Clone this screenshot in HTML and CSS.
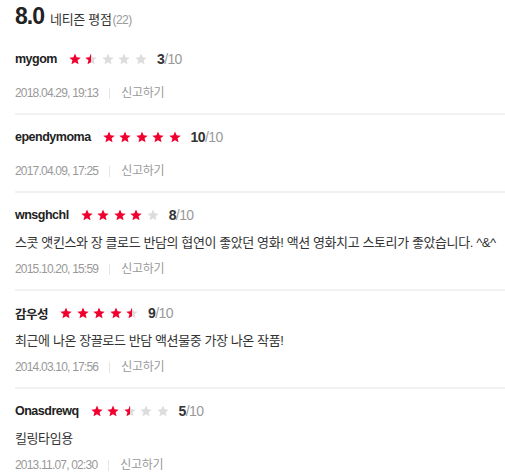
FILE: index.html
```html
<!DOCTYPE html>
<html lang="ko">
<head>
<meta charset="utf-8">
<link rel="stylesheet" href="styles.css">
</head>
<body>
<svg class="defs" width="0" height="0" aria-hidden="true">
  <defs>
    <linearGradient id="half" x1="0" x2="1" y1="0" y2="0">
      <stop offset="50%" stop-color="#f0002e"/>
      <stop offset="50%" stop-color="#dcdcdc"/>
    </linearGradient>
    <symbol id="star" viewBox="0 0 12 12">
      <polygon points="6,0.5 7.59,4.32 11.71,4.65 8.57,7.33 9.53,11.35 6,9.2 2.47,11.35 3.43,7.33 0.29,4.65 4.41,4.32"/>
    </symbol>
  </defs>
</svg>
<div class="page">
  <div class="header">
    <span class="score-big">8.0</span>
    <span class="header-label">네티즌 평점</span><span class="header-count">(22)</span>
  </div>
  <ul class="reviews">
    <li class="review">
      <div class="line">
        <span class="name">mygom</span>
        <span class="stars">
          <svg class="star on"><use href="#star"/></svg>
          <svg class="star half"><use href="#star"/></svg>
          <svg class="star"><use href="#star"/></svg>
          <svg class="star"><use href="#star"/></svg>
          <svg class="star"><use href="#star"/></svg>
        </span>
        <span class="score"><b>3</b>/10</span>
      </div>
      <div class="meta"><span class="date">2018.04.29, 19:13</span><span class="report">신고하기</span></div>
    </li>
    <li class="review">
      <div class="line">
        <span class="name">ependymoma</span>
        <span class="stars">
          <svg class="star on"><use href="#star"/></svg>
          <svg class="star on"><use href="#star"/></svg>
          <svg class="star on"><use href="#star"/></svg>
          <svg class="star on"><use href="#star"/></svg>
          <svg class="star on"><use href="#star"/></svg>
        </span>
        <span class="score"><b>10</b>/10</span>
      </div>
      <div class="meta"><span class="date">2017.04.09, 17:25</span><span class="report">신고하기</span></div>
    </li>
    <li class="review">
      <div class="line">
        <span class="name">wnsghchl</span>
        <span class="stars">
          <svg class="star on"><use href="#star"/></svg>
          <svg class="star on"><use href="#star"/></svg>
          <svg class="star on"><use href="#star"/></svg>
          <svg class="star on"><use href="#star"/></svg>
          <svg class="star"><use href="#star"/></svg>
        </span>
        <span class="score"><b>8</b>/10</span>
      </div>
      <p class="text">스콧 앳킨스와 장 클로드 반담의 협연이 좋았던 영화! 액션 영화치고 스토리가 좋았습니다. ^&amp;^</p>
      <div class="meta"><span class="date">2015.10.20, 15:59</span><span class="report">신고하기</span></div>
    </li>
    <li class="review">
      <div class="line">
        <span class="name">감우성</span>
        <span class="stars">
          <svg class="star on"><use href="#star"/></svg>
          <svg class="star on"><use href="#star"/></svg>
          <svg class="star on"><use href="#star"/></svg>
          <svg class="star on"><use href="#star"/></svg>
          <svg class="star half"><use href="#star"/></svg>
        </span>
        <span class="score"><b>9</b>/10</span>
      </div>
      <p class="text">최근에 나온 장끌로드 반담 액션물중 가장 나온 작품!</p>
      <div class="meta"><span class="date">2014.03.10, 17:56</span><span class="report">신고하기</span></div>
    </li>
    <li class="review">
      <div class="line">
        <span class="name">Onasdrewq</span>
        <span class="stars">
          <svg class="star on"><use href="#star"/></svg>
          <svg class="star on"><use href="#star"/></svg>
          <svg class="star half"><use href="#star"/></svg>
          <svg class="star"><use href="#star"/></svg>
          <svg class="star"><use href="#star"/></svg>
        </span>
        <span class="score"><b>5</b>/10</span>
      </div>
      <p class="text">킬링타임용</p>
      <div class="meta"><span class="date">2013.11.07, 02:30</span><span class="report">신고하기</span></div>
    </li>
  </ul>
</div>
</body>
</html>
```
FILE: styles.css
```css
* { box-sizing: border-box; }
html, body { margin: 0; padding: 0; background: #fff; }
body {
  font-family: "Liberation Sans", "Noto Sans CJK KR", sans-serif;
  color: #333;
}
.defs { position: absolute; width: 0; height: 0; overflow: hidden; }
.page { padding-left: 15px; }

.header {
  display: flex;
  align-items: baseline;
  padding-top: 3px;
  height: 38px;
}
.score-big {
  font-size: 23px;
  font-weight: bold;
  letter-spacing: -1px;
  color: #222;
  line-height: 26px;
  margin-right: 6px;
}
.header-label {
  font-size: 13px;
  letter-spacing: -0.3px;
  color: #333;
}
.header-count {
  font-size: 12px;
  letter-spacing: -0.6px;
  color: #999;
  margin-left: 1px;
}

.reviews { list-style: none; margin: 0; padding: 0; }
.review {
  display: flex;
  flex-direction: column;
  padding: 14px 0 12px;
  border-bottom: 2px solid #f2f2f2;
}
.review:first-child { padding-top: 13px; }
.review:last-child { border-bottom: none; }

.line {
  display: flex;
  align-items: center;
  height: 16px;
}
.name {
  font-size: 12.5px;
  font-weight: bold;
  letter-spacing: -0.5px;
  color: #222;
  margin-right: 12px;
}
.stars { display: flex; gap: 4.5px; margin-right: 10px; }
.star { width: 12px; height: 12px; fill: #dcdcdc; display: block; }
.star.on { fill: #f0002e; }
.star.half { fill: url(#half); }
.score {
  font-size: 14px;
  letter-spacing: -0.6px;
  color: #999;
}
.score b { color: #333; font-weight: bold; }

.text {
  margin: 11px 0 0;
  font-size: 13px;
  line-height: 17px;
  letter-spacing: -0.4px;
  color: #333;
}
.meta {
  display: flex;
  align-items: center;
  height: 16px;
  margin-top: 18px;
  font-size: 12px;
  color: #999;
}
.text + .meta { margin-top: 10px; }
.date { letter-spacing: -0.8px; }
.report {
  margin-left: 11px;
  padding-left: 11px;
  border-left: 1px solid #e5e5e5;
  line-height: 11px;
  letter-spacing: -0.3px;
  color: #999;
}
```
